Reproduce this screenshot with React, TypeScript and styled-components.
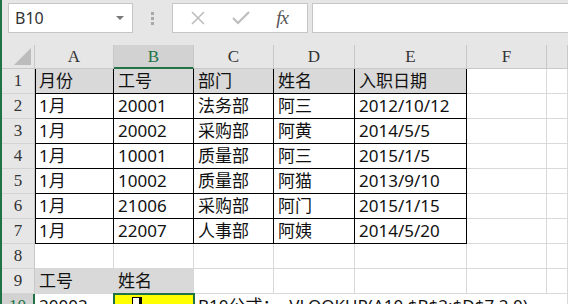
import { Fragment } from "react";
import styled, { createGlobalStyle } from "styled-components";

const GlobalStyle = createGlobalStyle`
  html, body {
    margin: 0;
    padding: 0;
    background: #e6e6e6;
  }
  body {
    font-family: "Noto Sans", "Noto Sans CJK SC", sans-serif;
  }
`;

const Window = styled.div`
  width: 568px;
  height: 304px;
  overflow: hidden;
  background: #e6e6e6;
  border-left: 2px solid #217346;
  box-sizing: border-box;
`;

const FormulaBar = styled.div`
  display: flex;
  align-items: flex-start;
  height: 45px;
  padding: 3px 0 0 6px;
  box-sizing: border-box;
`;

const NameBox = styled.div`
  width: 125px;
  height: 30px;
  box-sizing: border-box;
  background: #fff;
  border: 1px solid #c6c6c6;
  display: flex;
  align-items: center;
  justify-content: space-between;
  padding: 0 8px 0 6px;
  font-size: 16px;
  color: #333;
`;

const Caret = styled.span`
  width: 0;
  height: 0;
  border-left: 4px solid transparent;
  border-right: 4px solid transparent;
  border-top: 4px solid #777;
`;

const Grip = styled.div`
  width: 39px;
  height: 30px;
  display: flex;
  flex-direction: column;
  align-items: center;
  justify-content: center;
  gap: 2px;

  span {
    width: 3px;
    height: 3px;
    background: #a8a8a8;
  }
`;

const FxBox = styled.div`
  width: 136px;
  height: 30px;
  box-sizing: border-box;
  background: #fff;
  border: 1px solid #c6c6c6;
  display: flex;
  align-items: center;
  justify-content: space-around;
  padding: 0 6px 0 4px;
`;

const Fx = styled.span`
  font-family: "Liberation Serif", serif;
  font-style: italic;
  font-size: 19px;
  color: #555;
  letter-spacing: -1px;
`;

const FormulaInput = styled.div`
  flex: 1;
  height: 30px;
  margin-left: 4px;
  box-sizing: border-box;
  background: #fff;
  border: 1px solid #c6c6c6;
  border-right: none;
`;

const Sheet = styled.div`
  display: grid;
  grid-template-columns: 33px 79px 80px 80px 81px 112px 80px 1fr;
  grid-template-rows: 24px;
  grid-auto-rows: 25px;
  background: #fff;
`;

const Corner = styled.div`
  background: #e6e6e6;
  border-right: 1px solid #c8c8c8;
  border-bottom: 1px solid #c8c8c8;
  display: flex;
  align-items: flex-end;
  justify-content: flex-end;
  padding: 0 3px 3px 0;

  span {
    width: 0;
    height: 0;
    border-left: 17px solid transparent;
    border-bottom: 17px solid #bcbcbc;
  }
`;

const ColHead = styled.div<{ $active?: boolean }>`
  background: ${(p) => (p.$active ? "#d2d2d2" : "#e6e6e6")};
  border-right: 1px solid #c8c8c8;
  border-bottom: ${(p) => (p.$active ? "2px solid #217346" : "1px solid #c8c8c8")};
  font-family: "Liberation Serif", serif;
  font-size: 17px;
  color: ${(p) => (p.$active ? "#217346" : "#333")};
  display: flex;
  align-items: center;
  justify-content: center;
  padding-top: 1px;
`;

const RowHead = styled.div<{ $active?: boolean }>`
  background: ${(p) => (p.$active ? "#d2d2d2" : "#e6e6e6")};
  border-right: ${(p) => (p.$active ? "2px solid #217346" : "1px solid #c8c8c8")};
  border-bottom: 1px solid #d4d4d4;
  font-family: "Liberation Serif", serif;
  font-size: 17px;
  color: ${(p) => (p.$active ? "#217346" : "#333")};
  display: flex;
  align-items: flex-end;
  justify-content: center;
  padding-bottom: 2px;
  box-sizing: border-box;
`;

const Cell = styled.div<{
  $fill?: string;
  $boxed?: boolean;
  $left?: boolean;
  $selected?: boolean;
  $span?: number;
}>`
  position: relative;
  background: ${(p) => p.$fill ?? "#fff"};
  border-right: 1px solid ${(p) => (p.$boxed ? "#000" : "#d9d9d9")};
  border-bottom: 1px solid ${(p) => (p.$boxed ? "#000" : "#d9d9d9")};
  ${(p) => (p.$left ? "box-shadow: inset 1px 0 0 #000;" : "")}
  ${(p) => (p.$selected ? "outline: 2px solid #217346; outline-offset: -1px; z-index: 1;" : "")}
  ${(p) => (p.$span ? `grid-column: span ${p.$span};` : "")}
  font-size: 17px;
  line-height: 24px;
  color: #111;
  padding: 0 3px 0 4px;
  white-space: nowrap;
`;

const Cursor = styled.span`
  position: absolute;
  left: 18px;
  top: 3px;
  width: 6px;
  height: 12px;
  background: #fff;
  border: 1px solid #000;
  border-right-width: 3px;
`;

const table = [
  ["月份", "工号", "部门", "姓名", "入职日期"],
  ["1月", "20001", "法务部", "阿三", "2012/10/12"],
  ["1月", "20002", "采购部", "阿黄", "2014/5/5"],
  ["1月", "10001", "质量部", "阿三", "2015/1/5"],
  ["1月", "10002", "质量部", "阿猫", "2013/9/10"],
  ["1月", "21006", "采购部", "阿门", "2015/1/15"],
  ["1月", "22007", "人事部", "阿姨", "2014/5/20"],
];

const columns = ["A", "B", "C", "D", "E", "F", ""];
const HEADER_FILL = "#d9d9d9";

const App = () => {
  return (
    <Window>
      <GlobalStyle />
      <FormulaBar>
        <NameBox>
          B10
          <Caret />
        </NameBox>
        <Grip>
          <span />
          <span />
          <span />
        </Grip>
        <FxBox>
          <svg width="16" height="16" viewBox="0 0 16 16">
            <path d="M2 2 L14 14 M14 2 L2 14" stroke="#bdbdbd" strokeWidth="1.6" fill="none" />
          </svg>
          <svg width="18" height="14" viewBox="0 0 18 14">
            <path d="M1 7 L6 12 L17 1" stroke="#bdbdbd" strokeWidth="2.2" fill="none" />
          </svg>
          <Fx>fx</Fx>
        </FxBox>
        <FormulaInput />
      </FormulaBar>

      <Sheet>
        <Corner>
          <span />
        </Corner>
        {columns.map((c) => (
          <ColHead key={c || "G"} $active={c === "B"}>
            {c}
          </ColHead>
        ))}

        {table.map((row, r) => (
          <Fragment key={r}>
            <RowHead>{r + 1}</RowHead>
            {row.map((v, i) => (
              <Cell
                key={i}
                $boxed
                $left={i === 0}
                $fill={r === 0 ? HEADER_FILL : undefined}
              >
                {v}
              </Cell>
            ))}
            <Cell />
            <Cell />
          </Fragment>
        ))}

        <RowHead>8</RowHead>
        {columns.map((c) => (
          <Cell key={`8${c}`} />
        ))}

        <RowHead>9</RowHead>
        <Cell $fill={HEADER_FILL}>工号</Cell>
        <Cell $fill={HEADER_FILL}>姓名</Cell>
        {columns.slice(2).map((c) => (
          <Cell key={`9${c}`} />
        ))}

        <RowHead $active>10</RowHead>
        <Cell>20002</Cell>
        <Cell $fill="#ffff00" $selected>
          <Cursor />
        </Cell>
        <Cell $span={5}>B10公式：=VLOOKUP(A10,$B$2:$D$7,2,0)</Cell>
      </Sheet>
    </Window>
  );
};

export default App;
